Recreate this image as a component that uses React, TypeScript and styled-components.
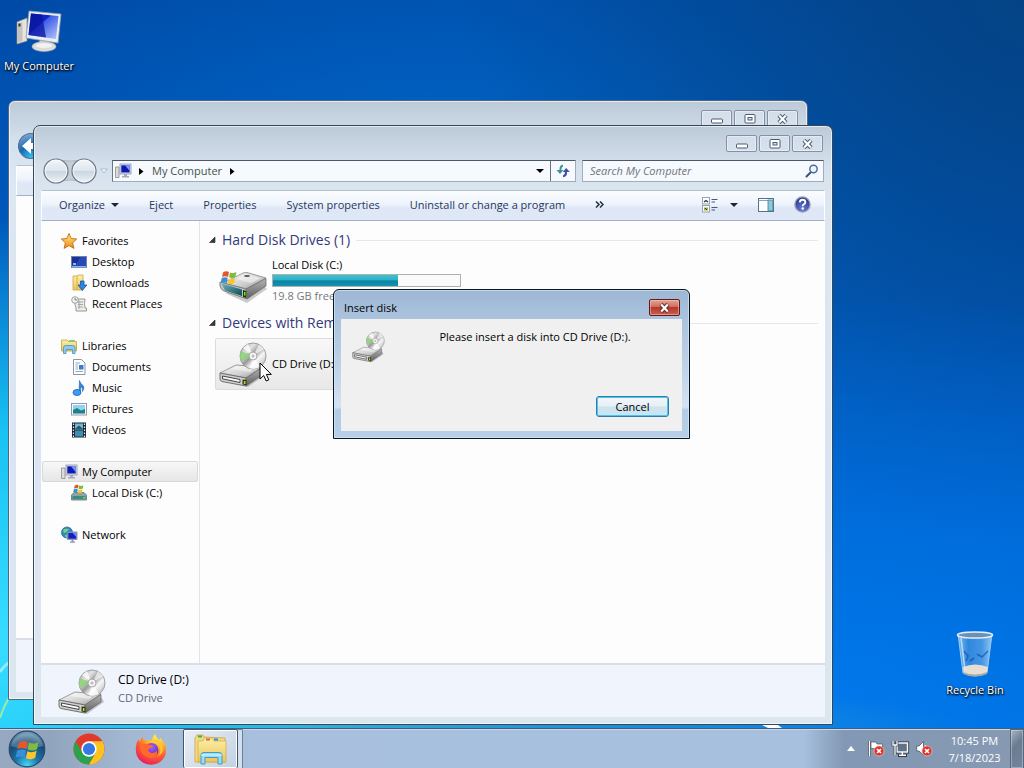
import React from "react";
import styled, { createGlobalStyle, css } from "styled-components";

const GlobalStyle = createGlobalStyle`
  * { box-sizing: border-box; }
  html, body, #root { height: 100%; margin: 0; }
  body {
    font: 11px/16px "Open Sans", "Noto Sans", sans-serif;
    color: #000;
    overflow: hidden;
  }
  button, input { font: inherit; color: inherit; margin: 0; }
  button { padding: 0; background: none; border: 0; cursor: default; }
  a { color: inherit; text-decoration: none; cursor: default; }
  svg { display: block; flex: none; }
`;

/* ---------- desktop ---------- */

const Screen = styled.div`
  display: flex;
  flex-direction: column;
  height: 100vh;
  overflow: hidden;
`;

const Desktop = styled.main`
  position: relative;
  flex: 1;
  min-height: 0;
  background:
    radial-gradient(ellipse 34% 58% at 0% 88%, #38dcff 0%, #18c2f2 50%, rgba(0, 130, 230, 0) 100%),
    radial-gradient(ellipse 75% 8% at 20% 100%, #42b8d8 0%, rgba(40, 150, 210, 0.8) 50%, rgba(0, 110, 220, 0) 100%),
    radial-gradient(ellipse 90% 60% at 75% 100%, rgba(0, 122, 238, 0.95) 0%, rgba(0, 110, 225, 0) 100%),
    radial-gradient(ellipse 55% 75% at 100% 0%, #044486 0%, rgba(2, 72, 150, 0) 100%),
    radial-gradient(ellipse 60% 50% at 45% 30%, #0066c6 0%, rgba(0, 88, 184, 0) 100%),
    linear-gradient(180deg, #0048a4 0%, #0058be 45%, #0068d4 100%);
`;

const Wallpaper = styled.svg`
  position: absolute;
  left: 0;
  bottom: 0;
  width: 100%;
`;

const Shortcut = styled.a<{ $corner: "topLeft" | "bottomRight" }>`
  position: absolute;
  display: flex;
  flex-direction: column;
  align-items: center;
  gap: 4px;
  width: 78px;
  color: #fff;
  text-shadow: 1px 1px 2px #000, 0 1px 2px #000;
  white-space: nowrap;
  ${(p) => (p.$corner === "topLeft" ? css`left: 0; top: 6px;` : css`right: 10px; bottom: 30px;`)}
`;

/* ---------- explorer window ---------- */

const Frame = styled.section<{ $back?: boolean }>`
  position: absolute;
  ${(p) => (p.$back ? css`inset: 100px 216px 28px 8px;` : css`inset: 125px 191px 3px 33px;`)}
  display: flex;
  flex-direction: column;
  padding: 0 7px 7px;
  border: 1px solid ${(p) => (p.$back ? "#4d6884" : "#35475a")};
  border-radius: 7px 7px 0 0;
  background: linear-gradient(180deg, #bccad8 0, #d5e1ec 40px, #dce7f1 80px, #dbe4f2 60%, #dce6ee 100%);
  box-shadow: inset 0 0 0 1px rgba(255, 255, 255, 0.6);
`;

const CaptionBar = styled.header`
  display: flex;
  justify-content: flex-end;
  gap: 2px;
  height: 34px;
  padding: 9px 2px 0 0;
`;

const CaptionButton = styled.button`
  display: grid;
  place-items: center;
  width: 31px;
  height: 17px;
  border: 1px solid #8291a8;
  border-radius: 2px;
  background: rgba(222, 232, 242, 0.6);
  box-shadow: inset 0 0 0 1px rgba(255, 255, 255, 0.4);
`;

const NavRow = styled.div`
  display: flex;
  align-items: center;
  height: 22px;
  margin: 0 1px 8px 0;
`;

const NavButtons = styled.div`
  display: flex;
  align-items: center;
  width: 71px;
  flex: none;
  & > svg { margin: 0 0 0 2px; }
`;

const AddressBar = styled.div`
  display: flex;
  flex: 1;
  align-self: stretch;
  align-items: stretch;
  min-width: 0;
  border: 1px solid #a3adb9;
  border-top-color: #4d5866;
  border-left-color: #6d7784;
  background: #f6f9fd;
`;

const Crumbs = styled.nav`
  display: flex;
  flex: 1;
  align-items: center;
  gap: 8px;
  padding: 0 6px 0 2px;
  color: #44544e;
`;

const Fill = styled.span`
  flex: 1;
`;

const RefreshButton = styled.button`
  display: grid;
  place-items: center;
  width: 25px;
  border-left: 1px solid #66717f;
`;

const SearchBox = styled.label`
  display: flex;
  align-items: center;
  align-self: stretch;
  width: 242px;
  margin-left: 6px;
  padding: 0 4px 0 7px;
  border: 1px solid #a3adb9;
  border-top-color: #4d5866;
  background: #f6f9fd;
`;

const SearchInput = styled.input`
  flex: 1;
  min-width: 0;
  padding: 0;
  border: 0;
  outline: 0;
  background: transparent;
  font-style: italic;
  &::placeholder { color: #6e757c; opacity: 1; }
`;

const Toolbar = styled.div`
  display: flex;
  align-items: center;
  height: 31px;
  padding: 0 13px 2px 17px;
  gap: 30px;
  border: 1px solid #fff;
  border-top-color: #b4c2d0;
  border-bottom-color: #a4afc4;
  background: linear-gradient(180deg, #fbfdff 0%, #eef4fc 45%, #dfe7f7 60%, #dfe8f7 100%);
  color: #1e395b;
  white-space: nowrap;
`;

const ToolButton = styled.button`
  display: flex;
  align-items: center;
  gap: 6px;
`;

const ToolIcons = styled.div`
  display: flex;
  align-items: center;
  gap: 20px;
  margin-left: auto;
`;

const Body = styled.div`
  display: flex;
  flex: 1;
  min-height: 0;
  background: #fdfdfd;
`;

const Sidebar = styled.nav`
  display: flex;
  flex-direction: column;
  gap: 21px;
  width: 159px;
  flex: none;
  padding: 9px 1px 0;
  border-right: 1px solid #e0e4ec;
`;

const Group = styled.ul`
  list-style: none;
  margin: 0;
  padding: 0;
`;

const SideLink = styled.a<{ $child?: boolean; $selected?: boolean }>`
  display: flex;
  align-items: center;
  gap: 5px;
  height: 21px;
  padding-left: ${(p) => (p.$child ? 28 : 18)}px;
  border: 1px solid transparent;
  border-radius: 2px;
  white-space: nowrap;
  ${(p) =>
    p.$selected &&
    css`
      border-color: #d9d9d9;
      background: linear-gradient(180deg, #f8f8f8, #e6e6e6);
    `}
`;

const Content = styled.div`
  flex: 1;
  min-width: 0;
  padding: 9px 7px 0 8px;
`;

const SectionTitle = styled.h2`
  display: flex;
  align-items: center;
  gap: 6px;
  height: 20px;
  margin: 0;
  font-weight: 400;
  font-size: 14px;
  line-height: 20px;
  color: #33397c;
  white-space: nowrap;
  &::after {
    content: "";
    flex: 1;
    height: 1px;
    background: #e6e8ec;
  }
`;

const DriveTile = styled.a<{ $hot?: boolean }>`
  display: flex;
  align-items: center;
  gap: 5px;
  width: 252px;
  height: 52px;
  margin: ${(p) => (p.$hot ? "5px" : "5px 0 6px")} 7px;
  padding: 0 3px;
  border: 1px solid transparent;
  border-radius: 2px;
  white-space: nowrap;
  ${(p) =>
    p.$hot &&
    css`
      border-color: #dcdcdc;
      background: linear-gradient(180deg, #f8f8f8, #e8e8e8);
    `}
`;

const DriveInfo = styled.span`
  display: flex;
  flex: 1;
  flex-direction: column;
  padding-bottom: 2px;
`;

const Capacity = styled.span`
  display: block;
  width: 189px;
  height: 13px;
  margin: 1px 0;
  border: 1px solid #b0b0b0;
  background: #fafafa;
`;

const Used = styled.span`
  display: block;
  height: 100%;
  background: linear-gradient(180deg, #45bccb 0%, #2fb5cb 40%, #0b84a4 55%, #1493b2 100%);
`;

const Muted = styled.span`
  color: #75787c;
`;

const Details = styled.footer`
  display: flex;
  align-items: center;
  gap: 12px;
  height: 54px;
  padding: 0 17px;
  border-top: 2px solid #d9dee8;
  background: #f0f4fd;
`;

const DetailsText = styled.div`
  display: flex;
  flex-direction: column;
  gap: 2px;
  padding-bottom: 4px;
`;

const DetailsName = styled.span`
  font-size: 12px;
`;

const DetailsKind = styled.span`
  color: #5a6779;
`;

/* ---------- dialog ---------- */

const Dialog = styled.div`
  position: absolute;
  left: 333px;
  top: 289px;
  width: 357px;
  padding: 0 7px 7px;
  border: 1px solid #0a1420;
  border-radius: 6px 6px 0 0;
  background: linear-gradient(180deg, #9db7d4 0, #abc3de 30px, #c4d6ea 60%, #d5e2f3 79%, #b3cce4 81%, #b7d0e8 100%);
  box-shadow: inset 0 0 0 1px rgba(210, 235, 250, 0.7);
`;

const DialogTitle = styled.header`
  display: flex;
  align-items: center;
  justify-content: space-between;
  height: 29px;
  padding: 6px 2px 0 3px;
`;

const CloseButton = styled.button`
  display: grid;
  place-items: center;
  width: 31px;
  height: 17px;
  border: 1px solid #5c1d1c;
  border-radius: 2px;
  background: linear-gradient(180deg, #e2a497 0%, #cf6e5e 45%, #b5392b 50%, #c9604e 100%);
  box-shadow: inset 0 0 0 1px rgba(255, 200, 190, 0.5);
`;

const DialogBody = styled.div`
  display: grid;
  grid-template-columns: 33px 1fr;
  padding: 11px 13px 14px 11px;
  row-gap: 33px;
  background: #f0f0f0;
`;

const Message = styled.p`
  margin: 0;
  padding-left: 16px;
  line-height: 14px;
  text-align: center;
`;

const CancelButton = styled.button`
  grid-column: 2;
  justify-self: end;
  width: 73px;
  height: 21px;
  border: 1px solid #2f7ea8;
  border-radius: 3px;
  background: linear-gradient(180deg, #f3f7f9 0%, #e6f0f5 48%, #cfe3ee 52%, #cde4f0 100%);
  box-shadow: inset 0 0 0 1px #4bc6ee;
  line-height: 14px;
`;

const Pointer = styled.svg`
  position: absolute;
  left: 259px;
  top: 362px;
`;

/* ---------- taskbar ---------- */

const Taskbar = styled.footer`
  display: flex;
  align-items: stretch;
  height: 40px;
  border-top: 1px solid #3d5f86;
  box-shadow: inset 0 1px 0 #c6d8ea;
  background: linear-gradient(90deg, #96a9c0 0, #91a4bd 50px, #a3b8d2 130px, #a8c0dd 260px, #a6c0de calc(100% - 220px), #8398b4 calc(100% - 180px), #8799b2 100%);
`;

const StartButton = styled.button`
  display: grid;
  align-items: center;
  width: 58px;
  padding-left: 8px;
`;

const TaskButton = styled.button`
  display: grid;
  place-items: center;
  width: 62px;
`;

const ActiveTask = styled.button`
  display: grid;
  place-items: center;
  width: 55px;
  margin-left: 1px;
  border: 1px solid #41566f;
  border-bottom: 0;
  border-radius: 2px;
  background: linear-gradient(135deg, #e8eef5, #c3d1e2);
  box-shadow: inset 0 0 0 1px #fff;
`;

const StackEdge = styled.span`
  width: 5px;
  border: 1px solid #6a819c;
  border-width: 1px 1px 0 0;
  border-radius: 0 2px 0 0;
  background: #d3dfec;
`;

const Tray = styled.div`
  display: flex;
  align-items: center;
  gap: 7px;
  margin-left: auto;
`;

const TrayButton = styled.button<{ $spaced?: boolean }>`
  display: grid;
  place-items: center;
  margin-right: ${(p) => (p.$spaced ? 6 : 0)}px;
`;

const Clock = styled.time`
  width: 61px;
  margin-left: 4px;
  color: #fff;
  text-align: center;
  line-height: 17px;
`;

const ShowDesktop = styled.button`
  align-self: stretch;
  width: 14px;
  margin-left: -2px;
  border: 1px solid #55687f;
  border-bottom: 0;
  background: linear-gradient(135deg, #a9b4c2 0%, #6a7c92 40%, #74869b 100%);
  box-shadow: inset 0 0 0 1px rgba(255, 255, 255, 0.3);
`;

/* ---------- drawings ---------- */

const HiddenSvg = styled.svg`
  position: absolute;
`;

const Gradients = () => (
  <HiddenSvg width="0" height="0" aria-hidden="true">
    <defs>
      <linearGradient id="metal" x1="0" y1="0" x2="1" y2="1">
        <stop offset="0" stopColor="#fafafa" /><stop offset=".6" stopColor="#cfcfcf" /><stop offset="1" stopColor="#8b8b8b" />
      </linearGradient>
      <linearGradient id="metalSide" x1="0" y1="0" x2="0" y2="1">
        <stop offset="0" stopColor="#b4b4b4" /><stop offset="1" stopColor="#5e5e5e" />
      </linearGradient>
      <linearGradient id="disc" x1="0" y1="0" x2="1" y2="1">
        <stop offset="0" stopColor="#a5a5a5" /><stop offset=".3" stopColor="#e4e4e4" /><stop offset=".48" stopColor="#989898" /><stop offset=".65" stopColor="#f7f7f7" /><stop offset="1" stopColor="#a5a5a5" />
      </linearGradient>
      <linearGradient id="screen" x1="0" y1="0" x2="1" y2="1">
        <stop offset="0" stopColor="#0c1aa0" /><stop offset=".4" stopColor="#1425c8" /><stop offset=".42" stopColor="#3d5ce8" /><stop offset="1" stopColor="#b9c8fa" />
      </linearGradient>
      <linearGradient id="teal" x1="0" y1="0" x2="1" y2="1">
        <stop offset="0" stopColor="#6fb3bb" /><stop offset="1" stopColor="#0d4a55" />
      </linearGradient>
      <linearGradient id="folder" x1="0" y1="0" x2="0" y2="1">
        <stop offset="0" stopColor="#fdf0a8" /><stop offset="1" stopColor="#e9c55c" />
      </linearGradient>
      <linearGradient id="star" x1="0" y1="0" x2="0" y2="1">
        <stop offset="0" stopColor="#ffe98a" /><stop offset="1" stopColor="#f08a12" />
      </linearGradient>
      <radialGradient id="orb" cx=".5" cy=".95" r=".95">
        <stop offset="0" stopColor="#46d6f6" /><stop offset=".35" stopColor="#1b74a8" /><stop offset=".7" stopColor="#174a75" /><stop offset="1" stopColor="#7ea7c0" />
      </radialGradient>
      <radialGradient id="navBlue" cx=".5" cy="1" r="1">
        <stop offset="0" stopColor="#35c7f5" /><stop offset=".5" stopColor="#1767b4" /><stop offset="1" stopColor="#7fa9d4" />
      </radialGradient>
      <linearGradient id="glassBall" x1="0" y1="0" x2="0" y2="1">
        <stop offset="0" stopColor="#f2f6fa" /><stop offset=".48" stopColor="#dde6ee" /><stop offset=".52" stopColor="#cbd6e0" /><stop offset="1" stopColor="#eef3f7" />
      </linearGradient>
      <radialGradient id="fox" cx=".7" cy=".1" r="1">
        <stop offset="0" stopColor="#fff04a" /><stop offset=".35" stopColor="#ffb02a" /><stop offset=".65" stopColor="#ff5a2e" /><stop offset="1" stopColor="#e01668" />
      </radialGradient>
      <radialGradient id="foxCore" cx=".5" cy=".3" r=".8">
        <stop offset="0" stopColor="#a55cff" /><stop offset="1" stopColor="#4a2bb0" />
      </radialGradient>
      <radialGradient id="helpBlue" cx=".5" cy=".8" r=".8">
        <stop offset="0" stopColor="#6a7fe0" /><stop offset="1" stopColor="#27307f" />
      </radialGradient>
      <linearGradient id="glass" x1="0" y1="0" x2="1" y2="0">
        <stop offset="0" stopColor="#a8d4f5" /><stop offset=".3" stopColor="#3f8fdc" /><stop offset=".7" stopColor="#5aa2e4" /><stop offset="1" stopColor="#c0e2fa" />
      </linearGradient>
    </defs>
  </HiddenSvg>
);

const Flag = () => (
  <g>
    <path d="M1 2.5C3 1 5 1 7 2L6 7C4 6 2 6 0 7Z" fill="#e5572a" />
    <path d="M8 2.4C10 3.4 12 3.4 14.5 2L13.4 7C11.3 8.3 9 8.2 7 7.3Z" fill="#7fbb3c" />
    <path d="M-.3 8C2 7 4 7 5.8 8L4.8 13C3 12-.0 12-1.3 13Z" fill="#3b8ed8" />
    <path d="M6.8 8.4C9 9.4 11 9.4 13.2 8L12.2 13C10 14.3 8 14.3 5.8 13.3Z" fill="#fbc52c" />
  </g>
);

const CdDriveIcon = ({ size = 48 }: { size?: number }) => (
  <svg width={size} height={size} viewBox="0 0 48 48" aria-hidden="true">
    <path d="M3 41L29 47L46 35L44 31L20 30Z" fill="#000" opacity=".2" />
    <path d="M1 33L17 25L43 27L27 38Z" fill="url(#metal)" stroke="#888" strokeWidth=".8" />
    <path d="M17 26L37 27.500L31 32L12 29Z" fill="#fff" opacity=".45" />
    <circle cx="34" cy="16" r="13" fill="url(#disc)" stroke="#8d8d8d" strokeWidth=".8" />
    <path d="M34 16L22 11A13 13 0 0 0 22 21Z" fill="#8ccf78" opacity=".85" />
    <path d="M34 16L24 8L29 4Z" fill="#fff" opacity=".75" />
    <path d="M34 16L40 4.500A13 13 0 0 1 45 9Z" fill="#fff" opacity=".7" />
    <path d="M34 16L31 28.500A13 13 0 0 0 41 27Z" fill="#fff" opacity=".75" />
    <circle cx="34" cy="16" r="4" fill="#f4f4f4" stroke="#999" strokeWidth=".8" />
    <circle cx="34" cy="16" r="1.500" fill="#bbb" />
    <path d="M1 33L27 38V46L3 41.500Q1 41 1 39Z" fill="#cfcfcf" stroke="#666" strokeWidth=".9" />
    <path d="M27 38L43 27.500V35L27 46Z" fill="url(#metalSide)" stroke="#666" strokeWidth=".7" />
    <path d="M3.500 36L21 39.500V42.500L3.500 38.800Z" fill="#fafafa" stroke="#444" strokeWidth="1" />
    <path d="M23.500 39.500L27.500 40V45.200L23.500 44.400Z" fill="#2c340c" />
    <path d="M24.800 41H26.500V44H24.800Z" fill="#b6d62e" />
  </svg>
);

const HardDiskIcon = ({ size = 48 }: { size?: number }) => (
  <svg width={size} height={size} viewBox="0 0 48 48" overflow="visible" aria-hidden="true">
    <g transform="translate(0 4)">
      <path d="M6 32L28 42L48 28L44 24L20 30Z" fill="#000" opacity=".2" />
      <path d="M4 22L24 12Q26 11.500 28 11.500L47 17L27 28Z" fill="url(#metal)" stroke="#888" strokeWidth=".8" />
      <path d="M26 13L42 17L32 22L18 18Z" fill="#fff" opacity=".45" />
      <path d="M27 28L47 17.500V25L28 38Z" fill="url(#metalSide)" stroke="#666" strokeWidth=".7" />
      <path d="M1 21L27 28L28 38L5 30Q2 29 1 25Z" fill="#c0c4c4" stroke="#777" strokeWidth=".9" />
      <path d="M2.500 22.500L23 28.500V35L6 29.500Z" fill="url(#teal)" />
      <path d="M24 29L27.300 30V37L24 36Z" fill="#1c3a0a" />
      <path d="M25 31H26.500V34.500H25Z" fill="#8be028" />
      <ellipse cx="28" cy="15" rx="3" ry="1" fill="#555" />
      <g transform="translate(3 9)"><Flag /></g>
    </g>
  </svg>
);

const ComputerIcon = () => (
  <svg width="48" height="48" viewBox="0 0 48 48" aria-hidden="true">
    <path d="M2 16L12 12V35L2 38Z" fill="#e6e4de" stroke="#8d8d8d" strokeWidth=".7" />
    <path d="M3 17.500L7.500 16V35L3 36.500Z" fill="#c5c3bb" />
    <rect x="3.500" y="17.500" width="2" height="3" fill="#333" />
    <ellipse cx="29" cy="40.500" rx="12" ry="5" fill="#dcdcdc" stroke="#a9a9a9" strokeWidth=".7" />
    <path d="M25 33L34 34L35 40H24Z" fill="#cfcfcf" />
    <ellipse cx="29" cy="39.500" rx="8" ry="2.500" fill="#f2f2f2" />
    <path d="M14 5L46 8L43 37L11 32Z" fill="#e9edf4" stroke="#8f99ad" strokeWidth=".8" />
    <path d="M16 7.500L43.500 10L41 33L13.500 29Z" fill="url(#screen)" />
    <path d="M16 7.500L27 8.500L31 31.500L13.500 29Z" fill="#0a16a0" opacity=".75" />
  </svg>
);

const RecycleBinIcon = () => (
  <svg width="48" height="48" viewBox="0 0 48 48" aria-hidden="true">
    <path d="M7 4H41L36 43Q24 49 12 43Z" fill="url(#glass)" opacity=".75" stroke="#cfe6f8" strokeWidth="1" />
    <path d="M12 37Q24 32 37 37L36 43Q24 48 12.500 43Z" fill="#e7ddd2" />
    <path d="M12 42Q24 47 36 42L36 44Q24 49 12.500 44Z" fill="#a9a9a9" />
    <path d="M13 21L17 26L15 31M37 21L31 27L26 24M19 31L23 28" fill="none" stroke="#1c4fa5" strokeWidth="1.600" opacity=".7" />
    <path d="M10 8L14 40" stroke="#dff0fc" strokeWidth="1.500" opacity=".7" />
    <ellipse cx="24" cy="5" rx="17.500" ry="3" fill="#6b92b6" stroke="#e3eef6" strokeWidth="1.500" />
  </svg>
);

const SmallMonitor = () => (
  <g>
    <path d="M.5 4H4V14.500H.5Z" fill="#dedcd6" stroke="#8b8b8b" strokeWidth=".8" />
    <rect x="5" y="1" width="11" height="10" fill="#d9dfef" stroke="#8a94b0" strokeWidth=".8" />
    <rect x="6.300" y="2.300" width="8.400" height="7.200" fill="#1018b4" />
    <path d="M10 2.300H14.700V8Z" fill="#7c98f4" />
    <path d="M9 11H12V13H14V14.500H7V13H9Z" fill="#a5abb8" />
  </g>
);

type GlyphName =
  | "star" | "desktop" | "downloads" | "recent" | "libraries" | "documents"
  | "music" | "pictures" | "videos" | "computer" | "disk" | "network";

const glyphs: Record<GlyphName, React.ReactNode> = {
  star: <path d="M8 .5L10.200 5.500L15.700 6L11.600 9.800L12.900 15.400L8 12.500L3.100 15.400L4.400 9.800L.3 6L5.800 5.500Z" fill="url(#star)" stroke="#c06a10" strokeWidth=".9" />,
  desktop: <g><rect x=".5" y="2.500" width="15" height="11" fill="#2848b8" stroke="#6f83a8" /><path d="M1 3H9L5 11H1Z" fill="#1c2f94" /><path d="M1 12H15V13.500H1Z" fill="#7fb4de" /><rect x="2" y="9" width="3" height="2" fill="#8fb8f0" /></g>,
  downloads: <g><path d="M2 1H6L7 0H12V15H2Z" fill="url(#folder)" stroke="#c9a33b" strokeWidth=".8" /><path d="M6 1V15" stroke="#d7b450" /><path d="M9.500 6H13V10H15.800L11.300 15.500L7 10H9.500Z" fill="#2e86e0" stroke="#14539f" strokeWidth=".8" /></g>,
  recent: <g><path d="M4 3H14Q13 8 14 12H15.500V15H5V12Q3 8 4 3Z" fill="#ecece8" stroke="#8f8f8a" strokeWidth=".9" /><path d="M7 6H12M7 8.500H12M7 11H12M8 4.500V13" stroke="#9aa2a0" strokeWidth=".9" /><circle cx="4" cy="4" r="3.300" fill="#f3f5f3" stroke="#909a98" strokeWidth=".9" /><path d="M4 2V4H6" fill="none" stroke="#666" strokeWidth=".8" /></g>,
  libraries: <g><path d="M.5 2H6L7 3.500H15.500V13H.5Z" fill="url(#folder)" stroke="#c7a03a" strokeWidth=".8" /><path d="M8 2H14V4H8Z" fill="#8cc77a" /><path d="M2.500 15.500V9.500Q2.500 7.500 5 7.500H11.500Q14 7.500 14 9.500V15.500H11.500V11.500H5V15.500Z" fill="#8ccbee" stroke="#4394c4" strokeWidth=".8" /></g>,
  documents: <g><path d="M2.500 .5H10.500L14 4V15.500H2.500Z" fill="#fdfdfe" stroke="#7d8ba0" strokeWidth=".9" /><path d="M4.500 4H9M4.500 6H7M4.500 8H7M4.500 10H7M4.500 12.500H12" stroke="#8b9db8" strokeWidth=".9" /><rect x="8" y="6" width="4.500" height="4.500" fill="#3c7cc4" /></g>,
  music: <g><path d="M8.500 .5Q9 3.500 12 5.500Q14 8 11.500 11.500Q12 7.500 9.500 6.500V12H8Z" fill="#2f8ae0" stroke="#1b5eb0" strokeWidth=".6" /><ellipse cx="6" cy="12.500" rx="4" ry="3" fill="#3c9cf0" stroke="#1b5eb0" strokeWidth=".8" /></g>,
  pictures: <g><rect x=".5" y="2.500" width="15" height="11.500" fill="#fff" stroke="#8f9aab" /><rect x="2" y="4" width="12" height="8.500" fill="#8fd3ee" /><path d="M2 9L6 7L10 9.500L14 8V12.500H2Z" fill="#1f7f88" /></g>,
  videos: <g><rect x="1" y=".5" width="14" height="15" fill="#1c2733" /><rect x="4" y="1.500" width="8" height="6" fill="#6fb7d4" /><rect x="4" y="8.500" width="8" height="6" fill="#3f8fb0" /><path d="M4 7L8 3.500L12 7Z" fill="#23566a" /><path d="M2.500 1.500V15M13.500 1.500V15" stroke="#e5eaee" strokeWidth="1.200" strokeDasharray="1.500 1.500" /></g>,
  computer: <SmallMonitor />,
  disk: <g><path d="M.5 10L3 7.500H13L15.500 10V15H.5Z" fill="#8aa6a0" stroke="#5d7a75" strokeWidth=".8" /><rect x="1.500" y="11" width="13" height="3" fill="#3d8a88" /><rect x="12" y="12" width="2" height="1.300" fill="#8fe04a" /><g transform="translate(3 -1) scale(.65)"><Flag /></g></g>,
  network: <g><circle cx="6" cy="5.500" r="5.500" fill="#2b8fb8" stroke="#1c5f86" strokeWidth=".7" /><path d="M2 3Q5 1 8 2Q6 5 3 6ZM4 8Q6 7 7 9L5 11Z" fill="#7ed08a" /><rect x="6.500" y="5" width="9.500" height="7.500" fill="#d4dcf0" stroke="#7786aa" strokeWidth=".8" /><rect x="7.200" y="5.700" width="8.100" height="6.100" fill="#1220c0" /><path d="M11.500 5.700H15.300V10Z" fill="#6f8cf0" /><path d="M10.500 12.500H12.500V14.500H14V15.700H9V14.500H10.500Z" fill="#8f97a8" /></g>,
};

const Glyph = ({ name }: { name: GlyphName }) => (
  <svg width="16" height="16" viewBox="0 0 16 16" overflow="visible" aria-hidden="true">{glyphs[name]}</svg>
);

const ArrowDown = ({ color = "#1c2733" }: { color?: string }) => (
  <svg width="8" height="4" viewBox="0 0 8 4" aria-hidden="true"><path d="M0 0H8L4 4Z" fill={color} /></svg>
);

const ArrowRight = () => (
  <svg width="5" height="7" viewBox="0 0 5 7" aria-hidden="true"><path d="M0 0L4.500 3.500L0 7Z" fill="#000" /></svg>
);

const Collapse = () => (
  <svg width="8" height="8" viewBox="0 0 8 8" aria-hidden="true"><path d="M7 1V6.500H1.500Z" fill="#3a3a3a" stroke="#222" strokeWidth=".6" /></svg>
);

const CrossShape = ({ dark }: { dark?: boolean }) => (
  <svg width="13" height="10" viewBox="0 0 13 10" aria-hidden="true">
    <path d="M3 1.300L10 8.700M10 1.300L3 8.700" stroke={dark ? "#4d5a70" : "#6b2a2a"} strokeWidth="4.200" />
    <path d="M3.200 1.600L9.800 8.400M9.800 1.600L3.200 8.400" stroke="#fff" strokeWidth="2.200" />
  </svg>
);

const CaptionControls = () => (
  <CaptionBar>
    <CaptionButton aria-label="Minimize">
      <svg width="12" height="12" viewBox="0 0 12 12"><rect x=".5" y="6" width="11" height="4" rx="1" fill="#fff" stroke="#4d5a70" /></svg>
    </CaptionButton>
    <CaptionButton aria-label="Restore">
      <svg width="12" height="10" viewBox="0 0 12 10"><rect x="1" y=".5" width="10" height="8.500" rx="1" fill="#fff" stroke="#4d5a70" /><rect x="4" y="3.500" width="4" height="2.500" fill="#dde5ee" stroke="#4d5a70" /></svg>
    </CaptionButton>
    <CaptionButton aria-label="Close"><CrossShape dark /></CaptionButton>
  </CaptionBar>
);

const ClearNav = () => (
  <svg width="66" height="28" viewBox="0 0 66 28" aria-hidden="true">
    <path d="M13 2Q27 6 42 2L42 26Q27 20 13 26Z" fill="#c3ced9" stroke="#a5b1be" strokeWidth=".8" />
    {[13, 41].map((x) => (
      <g key={x}>
        <circle cx={x} cy="14" r="12" fill="url(#glassBall)" stroke="#6c7a88" strokeWidth="1.200" />
        <circle cx={x} cy="14" r="10.800" fill="none" stroke="#fff" opacity=".7" />
      </g>
    ))}
    <path d="M57.500 12H64.500L61 16Z" fill="#eef2f6" stroke="#aab4c0" strokeWidth=".8" />
  </svg>
);

const BlueNav = () => (
  <svg width="66" height="28" viewBox="0 0 66 28" aria-hidden="true">
    <circle cx="13" cy="14" r="12.500" fill="url(#navBlue)" stroke="#4f6f90" strokeWidth="1.200" />
    <path d="M4 14L13 6V11H20V17H13V22Z" fill="#fff" />
  </svg>
);

const RefreshIcon = () => (
  <svg width="14" height="14" viewBox="0 0 14 14" aria-hidden="true">
    <path d="M7 .8Q3.500 1 3.500 5V6H.5L4 10L7.500 6H5.300Q5.300 3 7 2.500Z" fill="#3f8f9c" />
    <path d="M7 13.200Q11 13 11 9V8H13.800L10.200 4L6.800 8H9Q9 11 7 11.500Z" fill="#3d4fa8" />
  </svg>
);

const SearchIcon = () => (
  <svg width="14" height="14" viewBox="0 0 14 14" aria-hidden="true">
    <path d="M6.500 7.500L1.500 12.500" stroke="#3b5272" strokeWidth="2" strokeLinecap="round" />
    <circle cx="8.500" cy="5" r="3.700" fill="#eef5fc" stroke="#4b6ea0" strokeWidth="1.500" />
  </svg>
);

const ViewsIcon = () => (
  <svg width="16" height="16" viewBox="0 0 16 16" aria-hidden="true">
    <rect x=".5" y=".5" width="7" height="6.500" fill="#fff" stroke="#98a3b3" />
    <rect x=".5" y="8.500" width="7" height="6.500" fill="#fff" stroke="#98a3b3" />
    <path d="M2 5L4 3.500L6 5" fill="none" stroke="#1c3a4c" strokeWidth="1.400" />
    <rect x="2" y="10.500" width="4" height="3" fill="#a9b040" />
    <path d="M3 11L5 13" stroke="#2c3c1c" />
    <path d="M9.500 2.500H15.500M9.500 5H13M9.500 10.500H15.500M9.500 13H13" stroke="#4d5c70" />
  </svg>
);

const PaneIcon = () => (
  <svg width="16" height="14" viewBox="0 0 16 14" aria-hidden="true">
    <rect x=".5" y=".5" width="15" height="13" fill="#fff" stroke="#5a7084" />
    <path d="M.5 2.500H15.500" stroke="#8fa3b5" />
    <rect x="10" y="2" width="5" height="11" fill="#8cc8d8" stroke="#3d7f94" strokeWidth=".8" />
  </svg>
);

const HelpIcon = () => (
  <svg width="17" height="17" viewBox="0 0 17 17" aria-hidden="true">
    <circle cx="8.500" cy="8.500" r="7.600" fill="url(#helpBlue)" stroke="#9aa0b4" strokeWidth="1.400" />
    <path d="M5.800 6.300Q6 3.800 8.600 3.800Q11.300 3.800 11.300 6.200Q11.300 7.600 9.600 8.500Q8.700 9 8.700 10.200" fill="none" stroke="#fff" strokeWidth="1.900" />
    <circle cx="8.700" cy="12.500" r="1.200" fill="#fff" />
  </svg>
);

const StartOrb = () => (
  <svg width="38" height="38" viewBox="0 0 38 38" aria-hidden="true">
    <circle cx="19" cy="19" r="17.800" fill="url(#orb)" stroke="#2b4c6c" strokeWidth="1.200" />
    <path d="M3 16A16.500 16.500 0 0 1 35 16Q19 21 3 16Z" fill="#fff" opacity=".22" />
    <g transform="translate(9.500 9) scale(1.450)"><Flag /></g>
  </svg>
);

const ChromeIcon = () => (
  <svg width="32" height="32" viewBox="0 0 32 32" aria-hidden="true">
    <circle cx="16" cy="16" r="15.500" fill="#e03a2d" />
    <path d="M2.600 8.300A15.500 15.500 0 0 0 16 31.500L22.500 19.800L16 16L9.500 19.800Z" fill="#2ba24c" />
    <path d="M29.400 8.300A15.500 15.500 0 0 1 16 31.500L22.700 19.800Q24 16 21 10L16 8.300Z" fill="#fcc31e" />
    <circle cx="16" cy="16" r="7.700" fill="#fff" />
    <circle cx="16" cy="16" r="6.100" fill="#3478e5" />
  </svg>
);

const FirefoxIcon = () => (
  <svg width="32" height="32" viewBox="0 0 32 32" aria-hidden="true">
    <path d="M20.500 .5Q20.500 4 24 7Q25 6.500 25 4.500Q31 10 31 17.500A15 14 0 0 1 1 18Q0 11 3.500 6.500Q3.800 8 5 8.500Q5.500 5.500 7.500 4.500Q8 6.500 10 7.500Q14 6.500 17 7.500Q17.500 3 20.500 .5Z" fill="url(#fox)" />
    <circle cx="16.500" cy="17" r="7" fill="url(#foxCore)" />
    <path d="M5 12Q9 9 15 12Q18 12 18 14Q14 15 13 17Q14 20 17 20Q21 20 22 17Q23 25 15 25Q5 23 5 12Z" fill="#ff6a2c" />
    <path d="M17 8Q25 9 25.500 17Q25 22 22 24Q28 21 28 15Q26 8 20 6Z" fill="#ffc634" />
  </svg>
);

const ExplorerIcon = () => (
  <svg width="34" height="32" viewBox="0 0 34 32" aria-hidden="true">
    <path d="M1 5L3 2H9L10 4L31 5V29H1Z" fill="#f3d982" stroke="#c9a548" strokeWidth=".8" />
    <path d="M10 5H18L20 8H32V29H4V8H9Z" fill="url(#folder)" stroke="#d2ad4e" strokeWidth=".8" />
    <path d="M4 2.500H8V4.500H4Z" fill="#45b04a" />
    <path d="M12 5.500H16V7.500H12Z" fill="#e0682e" />
    <path d="M20 5.500H24V7.500H20Z" fill="#3a8fd0" />
    <path d="M7 31V22Q7 19.500 10 19.500H25Q28 19.500 28 22V31H24V24.500H11V31Z" fill="#9bdcf4" stroke="#3d9cc8" />
    <path d="M7 22H28" stroke="#dff5fc" />
  </svg>
);

const RedBadge = ({ x, y }: { x: number; y: number }) => (
  <g transform={`translate(${x} ${y})`}>
    <circle r="5" fill="#d8352a" stroke="#f1b3ad" strokeWidth=".8" />
    <path d="M-2-2L2 2M2-2L-2 2" stroke="#fff" strokeWidth="1.700" />
  </g>
);

const FlagTray = () => (
  <svg width="17" height="17" viewBox="0 0 17 17" aria-hidden="true">
    <path d="M1.500 1V16.500" stroke="#394452" strokeWidth="3" />
    <path d="M1.500 1V16.500" stroke="#fff" strokeWidth="1.500" />
    <path d="M3 2H8L9 4H14.500V10H8L7 8.500H3Z" fill="#fff" stroke="#4a5565" strokeWidth=".7" />
    <RedBadge x={11} y={11} />
  </svg>
);

const NetworkTray = () => (
  <svg width="17" height="17" viewBox="0 0 17 17" overflow="visible" aria-hidden="true">
    <rect x="5" y="3" width="10.500" height="9" fill="none" stroke="#303a48" strokeWidth="3.200" />
    <path d="M6 15.500H15" stroke="#303a48" strokeWidth="3" />
    <rect x="5" y="3" width="10.500" height="9" fill="#5f7287" stroke="#fff" strokeWidth="1.400" />
    <path d="M10.300 12V15M7 15.300H14" stroke="#fff" strokeWidth="1.500" />
    <path d="M1 1V5H5V1M3 5V15" fill="none" stroke="#303a48" strokeWidth="2.600" />
    <path d="M1 1V5H5V1M3 5V15" fill="none" stroke="#fff" strokeWidth="1.300" />
  </svg>
);

const VolumeTray = () => (
  <svg width="17" height="17" viewBox="0 0 17 17" aria-hidden="true">
    <path d="M.7 6H3L7.500 1.500V15L3 11H.7Z" fill="#fff" stroke="#4a5565" strokeWidth=".8" />
    <path d="M9 5Q11 8 9 12" fill="none" stroke="#fff" />
    <RedBadge x={11} y={11} />
  </svg>
);

/* ---------- data ---------- */

type SideItem = { icon: GlyphName; label: string; child?: boolean; selected?: boolean };

const sidebar: SideItem[][] = [
  [
    { icon: "star", label: "Favorites" },
    { icon: "desktop", label: "Desktop", child: true },
    { icon: "downloads", label: "Downloads", child: true },
    { icon: "recent", label: "Recent Places", child: true },
  ],
  [
    { icon: "libraries", label: "Libraries" },
    { icon: "documents", label: "Documents", child: true },
    { icon: "music", label: "Music", child: true },
    { icon: "pictures", label: "Pictures", child: true },
    { icon: "videos", label: "Videos", child: true },
  ],
  [
    { icon: "computer", label: "My Computer", selected: true },
    { icon: "disk", label: "Local Disk (C:)", child: true },
  ],
  [{ icon: "network", label: "Network" }],
];

const commands = ["Eject", "Properties", "System properties", "Uninstall or change a program"];

const usedShare = 67;

/* ---------- page ---------- */

const BackWindow = () => (
  <Frame $back aria-label="Background window">
    <CaptionControls />
    <NavRow><NavButtons><BlueNav /></NavButtons></NavRow>
    <Toolbar />
    <Body />
    <Details />
  </Frame>
);

const ExplorerWindow = () => (
  <Frame aria-label="My Computer">
    <CaptionControls />
    <NavRow>
      <NavButtons><ClearNav /></NavButtons>
      <AddressBar>
        <Crumbs>
          <Glyph name="computer" />
          <ArrowRight />
          <a href="#computer">My Computer</a>
          <ArrowRight />
          <Fill />
          <ArrowDown color="#000" />
        </Crumbs>
        <RefreshButton aria-label="Refresh"><RefreshIcon /></RefreshButton>
      </AddressBar>
      <SearchBox>
        <SearchInput placeholder="Search My Computer" aria-label="Search My Computer" />
        <SearchIcon />
      </SearchBox>
    </NavRow>
    <Toolbar>
      <ToolButton>Organize <ArrowDown /></ToolButton>
      {commands.map((label) => <ToolButton key={label}>{label}</ToolButton>)}
      <ToolButton aria-label="More commands">
        <svg width="9" height="7" viewBox="0 0 9 7"><path d="M1 .5L4 3.500L1 6.500M5 .5L8 3.500L5 6.500" fill="none" stroke="#1e2f45" strokeWidth="1.500" /></svg>
      </ToolButton>
      <ToolIcons>
        <ToolButton aria-label="Change view"><ViewsIcon /><Fill /><ArrowDown /></ToolButton>
        <ToolButton aria-label="Preview pane"><PaneIcon /></ToolButton>
        <ToolButton aria-label="Help"><HelpIcon /></ToolButton>
      </ToolIcons>
    </Toolbar>
    <Body>
      <Sidebar>
        {sidebar.map((group) => (
          <Group key={group[0].label}>
            {group.map((item) => (
              <li key={item.label}>
                <SideLink href="#place" $child={item.child} $selected={item.selected}>
                  <Glyph name={item.icon} />
                  {item.label}
                </SideLink>
              </li>
            ))}
          </Group>
        ))}
      </Sidebar>
      <Content>
        <SectionTitle><Collapse />Hard Disk Drives (1)</SectionTitle>
        <DriveTile href="#c">
          <HardDiskIcon />
          <DriveInfo>
            <span>Local Disk (C:)</span>
            <Capacity><Used style={{ width: `${usedShare}%` }} /></Capacity>
            <Muted>19.8 GB free</Muted>
          </DriveInfo>
        </DriveTile>
        <SectionTitle><Collapse />Devices with Removable Storage (1)</SectionTitle>
        <DriveTile href="#d" $hot>
          <CdDriveIcon />
          CD Drive (D:)
        </DriveTile>
      </Content>
    </Body>
    <Details>
      <CdDriveIcon />
      <DetailsText>
        <DetailsName>CD Drive (D:)</DetailsName>
        <DetailsKind>CD Drive</DetailsKind>
      </DetailsText>
    </Details>
  </Frame>
);

export default function App() {
  return (
    <Screen>
      <GlobalStyle />
      <Gradients />
      <Desktop>
        <Wallpaper viewBox="0 0 1024 120" aria-hidden="true">
          <path d="M0 64Q5 56 16 50" fill="none" stroke="#b9f2ff" strokeWidth="3" opacity=".7" />
          <path d="M0 110Q6 90 20 76" fill="none" stroke="#b4f28c" strokeWidth="2" opacity=".8" />
          <path d="M762 117H778L782 120H768Z" fill="#fff" />
        </Wallpaper>
        <Shortcut href="#computer" $corner="topLeft"><ComputerIcon />My Computer</Shortcut>
        <Shortcut href="#bin" $corner="bottomRight"><RecycleBinIcon />Recycle Bin</Shortcut>
        <BackWindow />
        <ExplorerWindow />
        <Pointer width="13" height="20" viewBox="0 0 13 20" aria-hidden="true">
          <path d="M1 1V17L4.700 13.500L7.200 19L9.800 17.900L7.400 12.400H12.300Z" fill="#fff" stroke="#000" />
        </Pointer>
        <Dialog role="dialog" aria-label="Insert disk">
          <DialogTitle>
            <span>Insert disk</span>
            <CloseButton aria-label="Close"><CrossShape /></CloseButton>
          </DialogTitle>
          <DialogBody>
            <CdDriveIcon size={33} />
            <Message>Please insert a disk into CD Drive (D:).</Message>
            <CancelButton>Cancel</CancelButton>
          </DialogBody>
        </Dialog>
      </Desktop>
      <Taskbar>
        <StartButton aria-label="Start"><StartOrb /></StartButton>
        <TaskButton aria-label="Chrome"><ChromeIcon /></TaskButton>
        <TaskButton aria-label="Firefox"><FirefoxIcon /></TaskButton>
        <ActiveTask aria-label="Explorer"><ExplorerIcon /></ActiveTask>
        <StackEdge />
        <Tray>
          <TrayButton $spaced aria-label="Show hidden icons">
            <svg width="8" height="5" viewBox="0 0 8 5"><path d="M4 0L8 5H0Z" fill="#fff" /></svg>
          </TrayButton>
          <TrayButton aria-label="Action center"><FlagTray /></TrayButton>
          <TrayButton aria-label="Network"><NetworkTray /></TrayButton>
          <TrayButton aria-label="Volume"><VolumeTray /></TrayButton>
          <Clock>10:45 PM<br />7/18/2023</Clock>
          <ShowDesktop aria-label="Show desktop" />
        </Tray>
      </Taskbar>
    </Screen>
  );
}
